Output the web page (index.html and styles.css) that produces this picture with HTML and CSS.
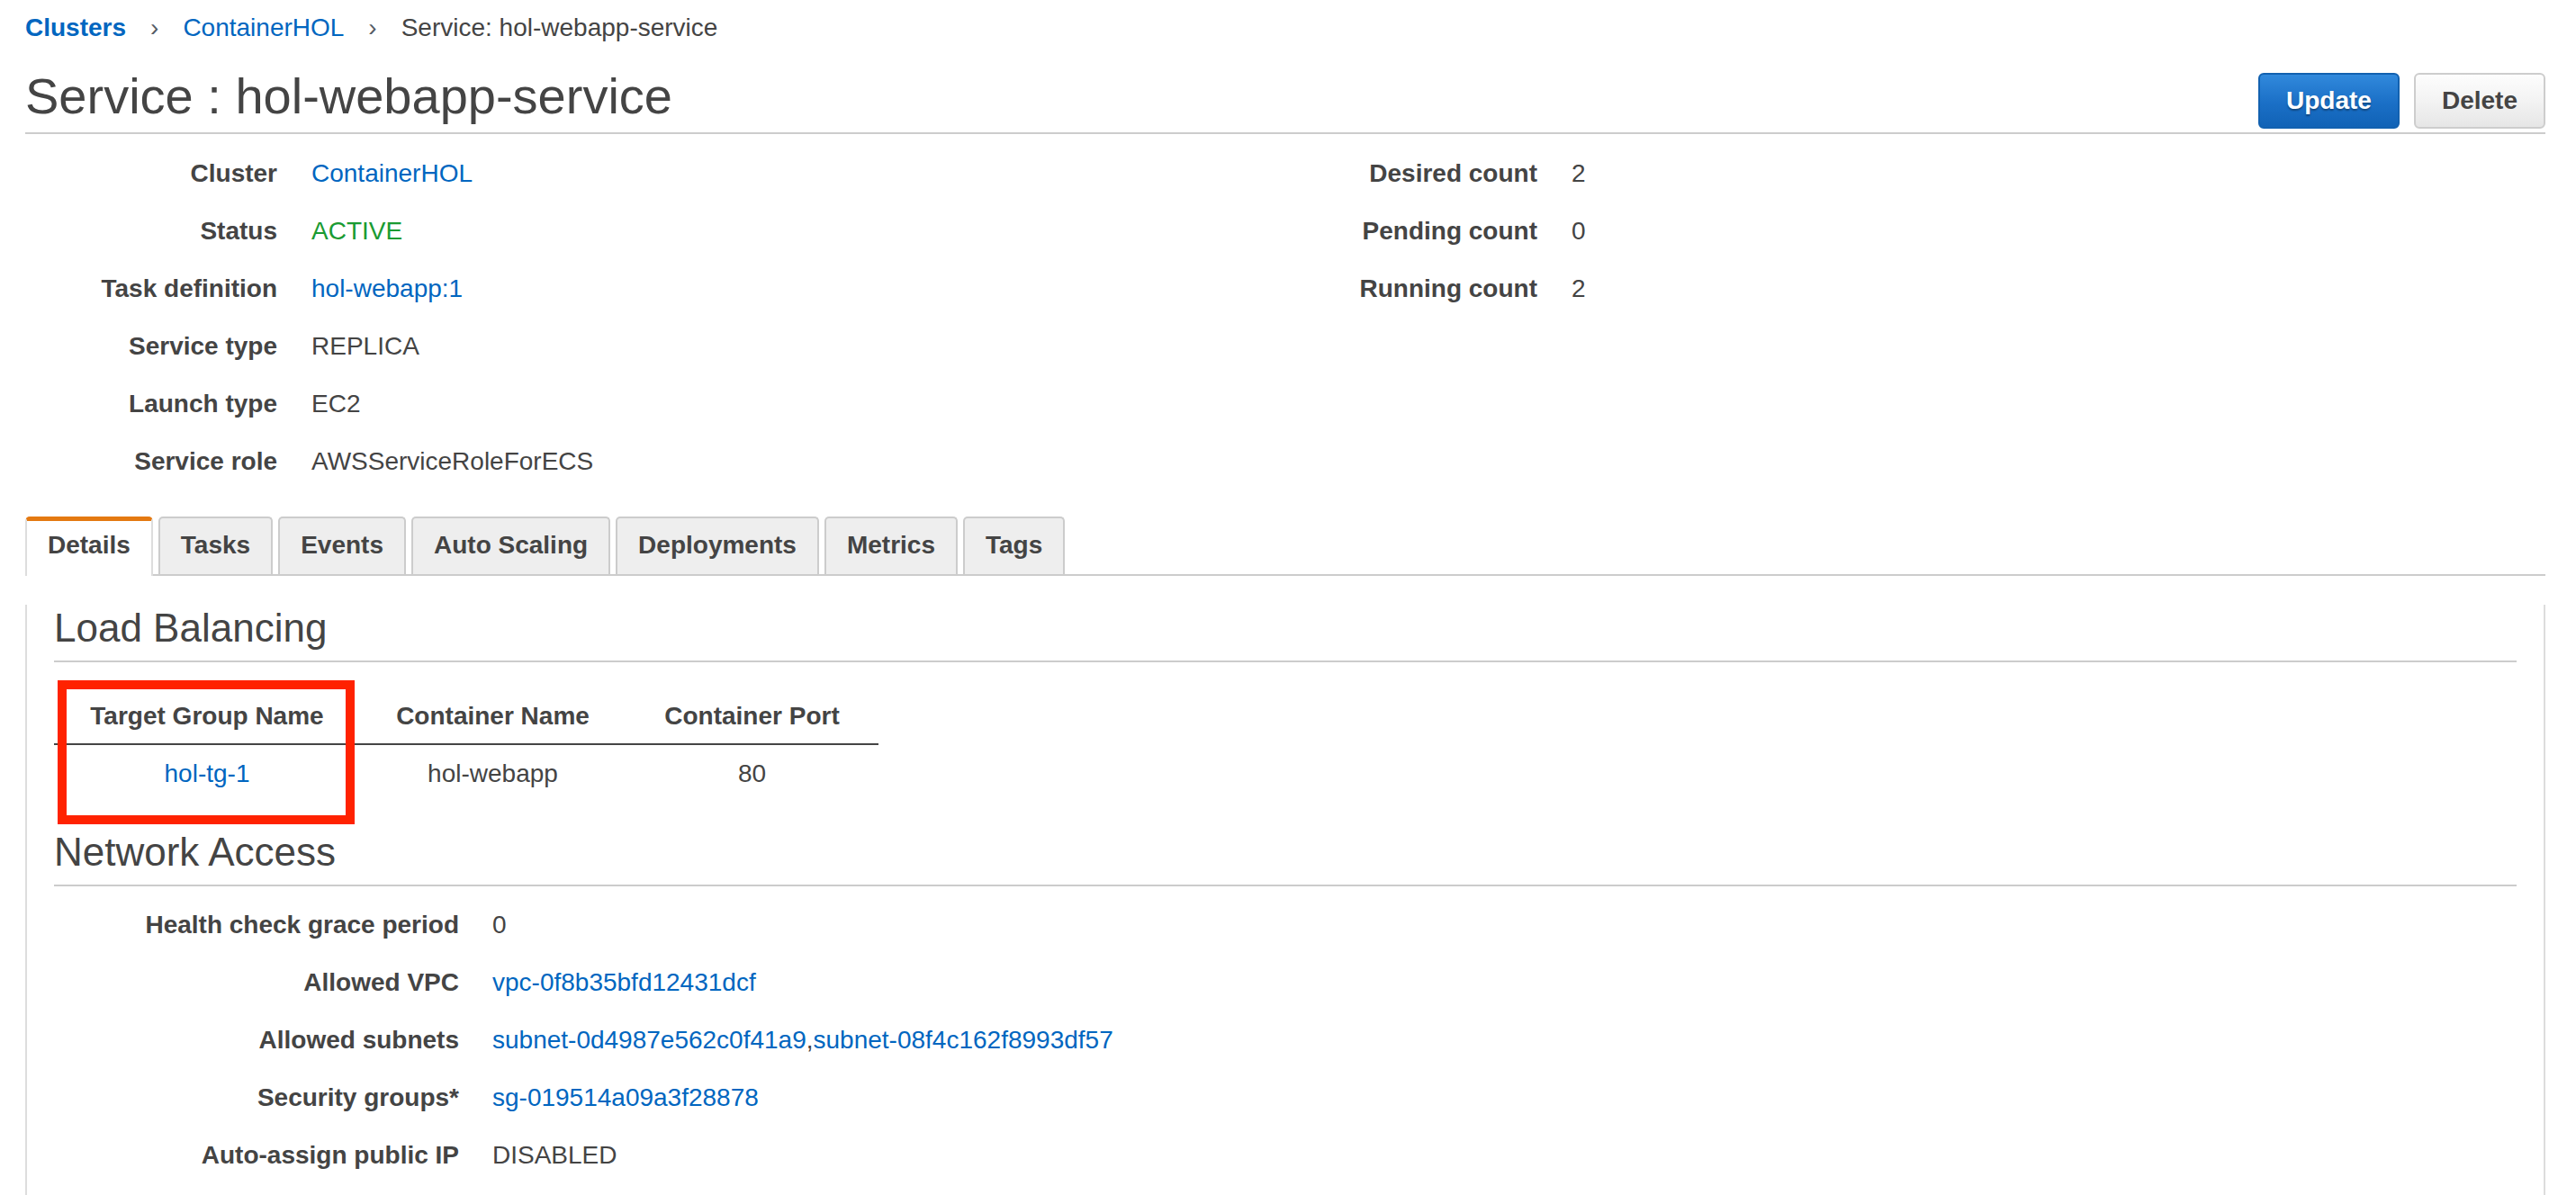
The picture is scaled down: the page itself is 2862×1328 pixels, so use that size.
FILE: index.html
```html
<!DOCTYPE html>
<html lang="en">
<head>
<meta charset="utf-8">
<title>Service : hol-webapp-service</title>
<link rel="stylesheet" href="styles.css">
</head>
<body>
<div class="page">
  <nav class="crumbs">
    <a class="crumb-link crumb-strong">Clusters</a><span class="sep">›</span><a class="crumb-link">ContainerHOL</a><span class="sep">›</span><span class="crumb-current">Service: hol-webapp-service</span>
  </nav>

  <header class="head">
    <h1 class="title">Service : hol-webapp-service</h1>
    <div class="actions">
      <button class="btn btn-primary">Update</button>
      <button class="btn btn-default">Delete</button>
    </div>
  </header>

  <section class="summary">
    <dl class="kv">
      <div class="kv-row"><dt>Cluster</dt><dd><a class="link">ContainerHOL</a></dd></div>
      <div class="kv-row"><dt>Status</dt><dd class="ok">ACTIVE</dd></div>
      <div class="kv-row"><dt>Task definition</dt><dd><a class="link">hol-webapp:1</a></dd></div>
      <div class="kv-row"><dt>Service type</dt><dd>REPLICA</dd></div>
      <div class="kv-row"><dt>Launch type</dt><dd>EC2</dd></div>
      <div class="kv-row"><dt>Service role</dt><dd>AWSServiceRoleForECS</dd></div>
    </dl>
    <dl class="kv">
      <div class="kv-row"><dt>Desired count</dt><dd>2</dd></div>
      <div class="kv-row"><dt>Pending count</dt><dd>0</dd></div>
      <div class="kv-row"><dt>Running count</dt><dd>2</dd></div>
    </dl>
  </section>

  <div class="tabs">
    <div class="tab tab-active">Details</div>
    <div class="tab">Tasks</div>
    <div class="tab">Events</div>
    <div class="tab">Auto Scaling</div>
    <div class="tab">Deployments</div>
    <div class="tab">Metrics</div>
    <div class="tab">Tags</div>
  </div>

  <div class="panel">
    <section class="section section-lb">
      <h2 class="section-title">Load Balancing</h2>
      <div class="table-wrap">
        <table class="lb-table">
          <thead>
            <tr>
              <th class="col-a">Target Group Name</th>
              <th class="col-b">Container Name</th>
              <th class="col-c">Container Port</th>
            </tr>
          </thead>
          <tbody>
            <tr>
              <td><a class="link">hol-tg-1</a></td>
              <td>hol-webapp</td>
              <td>80</td>
            </tr>
          </tbody>
        </table>
        <div class="highlight"></div>
      </div>
    </section>

    <section class="section section-net">
      <h2 class="section-title">Network Access</h2>
      <dl class="kv kv-wide">
        <div class="kv-row"><dt>Health check grace period</dt><dd>0</dd></div>
        <div class="kv-row"><dt>Allowed VPC</dt><dd><a class="link">vpc-0f8b35bfd12431dcf</a></dd></div>
        <div class="kv-row"><dt>Allowed subnets</dt><dd><a class="link">subnet-0d4987e562c0f41a9</a>,<a class="link">subnet-08f4c162f8993df57</a></dd></div>
        <div class="kv-row"><dt>Security groups*</dt><dd><a class="link">sg-019514a09a3f28878</a></dd></div>
        <div class="kv-row"><dt>Auto-assign public IP</dt><dd>DISABLED</dd></div>
      </dl>
    </section>
  </div>
</div>
</body>
</html>
```

FILE: styles.css
```css
html, body {
  margin: 0;
  padding: 0;
  background: #ffffff;
}

body {
  font-family: "Liberation Sans", Arial, Helvetica, sans-serif;
  color: #444444;
  font-size: 28px;
}

.page {
  padding: 11px 34px 0 28px;
}

/* breadcrumb */
.crumbs {
  display: flex;
  align-items: center;
  font-size: 28px;
  line-height: 40px;
  white-space: nowrap;
}

.crumb-link {
  color: #0066c0;
  text-decoration: none;
}

.crumb-strong {
  font-weight: bold;
}

.sep {
  margin: 0 27px;
  color: #545b64;
}

.crumb-current {
  color: #444444;
}

/* header */
.head {
  margin-top: 24px;
  display: flex;
  justify-content: space-between;
  align-items: flex-end;
  padding-bottom: 4px;
  border-bottom: 2px solid #cccccc;
}

.title {
  margin: 0 0 4px 0;
  font-size: 56px;
  line-height: 64px;
  font-weight: normal;
  color: #444444;
}

.actions {
  display: flex;
  gap: 16px;
}

.btn {
  font-family: "Liberation Sans", Arial, Helvetica, sans-serif;
  font-size: 28px;
  font-weight: bold;
  height: 62px;
  line-height: 58px;
  padding: 0 29px;
  border-radius: 6px;
  border: 2px solid #cccccc;
  cursor: pointer;
}

.btn-primary {
  color: #ffffff;
  background: linear-gradient(to bottom, #3189dc 0%, #1a6fc6 55%, #1162b6 100%);
  border-color: #1261b0;
  text-shadow: 0 2px 2px rgba(0, 0, 0, 0.35);
}

.btn-default {
  color: #444444;
  background: linear-gradient(to bottom, #fdfdfd 0%, #f3f3f3 50%, #e6e6e6 100%);
  border-color: #cdcdcd;
}

/* key/value lists */
.summary {
  display: grid;
  grid-template-columns: 1fr 1fr;
  padding-top: 12px;
}

.kv {
  margin: 0;
}

.kv-row {
  display: grid;
  grid-template-columns: 280px 1fr;
  column-gap: 38px;
  line-height: 64px;
  font-size: 28px;
}

.kv dt {
  text-align: right;
  font-weight: bold;
  color: #444444;
  white-space: nowrap;
}

.kv dd {
  margin: 0;
  color: #444444;
  white-space: nowrap;
}

.kv dd.ok {
  color: #1a9b32;
}

.link {
  color: #0066c0;
  text-decoration: none;
}

/* tabs */
.tabs {
  margin-top: 29px;
  display: flex;
  align-items: flex-start;
  gap: 6px;
  border-bottom: 2px solid #cccccc;
}

.tab {
  font-size: 28px;
  font-weight: bold;
  line-height: 40px;
  padding: 10px 23px 12px;
  border: 2px solid #cccccc;
  border-bottom: 0;
  border-radius: 5px 5px 0 0;
  background: #eeeeee;
  color: #444444;
  white-space: nowrap;
}

.tab-active {
  background: #ffffff;
  border-color: #dddddd;
  border-top: 5px solid #e47911;
  padding-top: 7px;
  padding-bottom: 14px;
  margin-bottom: -2px;
}

/* panel */
.panel {
  border-left: 2px solid #dddddd;
  border-right: 2px solid #dddddd;
  padding: 0 30px 80px 30px;
}

.section-title {
  margin: 0;
  font-size: 44px;
  line-height: 52px;
  font-weight: normal;
  color: #444444;
  padding-bottom: 10px;
  border-bottom: 2px solid #cccccc;
}

.section-lb .section-title {
  margin-top: 32px;
}

.section-net .section-title {
  margin-top: 29px;
}

.table-wrap {
  position: relative;
  margin-top: 40px;
  width: 916px;
}

.lb-table {
  border-collapse: separate;
  border-spacing: 0;
  table-layout: fixed;
  width: 916px;
  font-size: 28px;
}

.lb-table th {
  font-weight: bold;
  line-height: 40px;
  padding: 0 0 10px 0;
  text-align: center;
  border-bottom: 2px solid #444444;
  white-space: nowrap;
}

.lb-table td {
  line-height: 40px;
  padding: 12px 0;
  text-align: center;
  white-space: nowrap;
}

.col-a { width: 340px; }
.col-b { width: 295px; }
.col-c { width: 281px; }

.highlight {
  position: absolute;
  left: 4px;
  top: -20px;
  width: 330px;
  height: 160px;
  box-sizing: border-box;
  border: 10px solid #ff2200;
  pointer-events: none;
}

.kv-wide {
  margin-top: 11px;
}

.kv-wide .kv-row {
  grid-template-columns: 450px 1fr;
  column-gap: 37px;
}
```
